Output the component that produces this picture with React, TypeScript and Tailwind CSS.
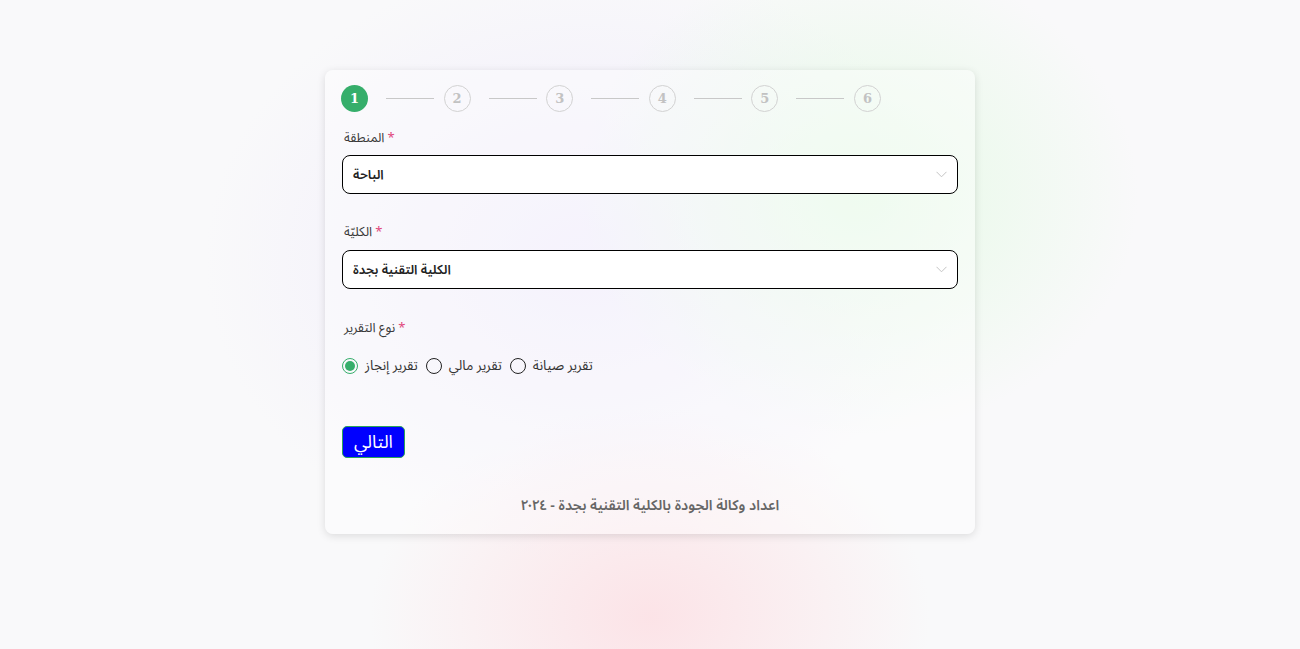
import React from "react";

function Chevron() {
  return (
    <svg width="11" height="7" viewBox="0 0 11 7" fill="none" className="shrink-0">
      <path d="M0.5 0.8L5.5 5.8L10.5 0.8" stroke="#c4c4c4" strokeWidth="1" />
    </svg>
  );
}

function Step({ n, active, last }: { n: number; active?: boolean; last?: boolean }) {
  return (
    <div className="flex items-center">
      <div
        className={
          active
            ? "w-[27px] h-[27px] rounded-full bg-[#36ae6b] text-white flex items-center justify-center text-[13px] font-bold font-['DejaVu_Serif',serif]"
            : "w-[27px] h-[27px] rounded-full border border-[#d2d2d2] text-[#c2c2c2] flex items-center justify-center text-[13px] font-bold font-['DejaVu_Serif',serif]"
        }
      >
        {n}
      </div>
      {!last && <div className="ml-[18px] mr-[9.6px] w-[48px] h-px bg-[#c8c8c8]" />}
    </div>
  );
}

function Label({ text }: { text: string }) {
  return (
    <div className="flex items-center gap-[3px] text-[13px] text-[#3a3a3a] px-[2px] h-[18px] font-['Noto_Sans_Arabic',sans-serif]">
      <span>{text}</span>
      <span className="text-[#e0457b]">*</span>
    </div>
  );
}

function Select({ value }: { value: string }) {
  return (
    <div className="h-[39px] w-full rounded-[8px] border border-black bg-white flex items-center justify-between pl-[10px] pr-[10px]">
      <span className="text-[13px] font-semibold text-[#222] font-['Noto_Sans_Arabic_UI',sans-serif]">{value}</span>
      <Chevron />
    </div>
  );
}

function Radio({ label, checked }: { label: string; checked?: boolean }) {
  return (
    <div className="flex items-center gap-[7px]">
      {checked ? (
        <div className="w-[16px] h-[16px] rounded-full border-[1.5px] border-[#36ae6b] flex items-center justify-center">
          <div className="w-[10px] h-[10px] rounded-full bg-[#36ae6b]" />
        </div>
      ) : (
        <div className="w-[16px] h-[16px] rounded-full border-[1.5px] border-[#222]" />
      )}
      <span className="text-[13.5px] text-[#333] font-['Noto_Sans_Arabic',sans-serif]">{label}</span>
    </div>
  );
}

export default function App() {
  return (
    <div className="min-h-screen w-full bg-[#f9f9fa] bg-[radial-gradient(ellipse_280px_240px_at_66%_30%,rgba(226,250,226,0.85),transparent),radial-gradient(ellipse_280px_210px_at_50%_95%,rgba(252,226,230,0.95),transparent),radial-gradient(ellipse_380px_300px_at_45%_40%,rgba(238,233,252,0.9),transparent)] pt-[70px] pb-[116px]">
      <div className="mx-auto w-[650px] rounded-[8px] bg-white/40 shadow-[0_2px_8px_rgba(0,0,0,0.12)] px-[17px] pt-[15px] pb-[18px]">
        <div className="flex items-center -ml-px">
          <Step n={1} active />
          <Step n={2} />
          <Step n={3} />
          <Step n={4} />
          <Step n={5} />
          <Step n={6} last />
        </div>

        <div className="mt-[18px]">
          <Label text="المنطقة" />
          <div className="mt-[7px]">
            <Select value="الباحة" />
          </div>
        </div>

        <div className="mt-[30px]">
          <Label text="الكليّة" />
          <div className="mt-[8px]">
            <Select value="الكلية التقنية بجدة" />
          </div>
        </div>

        <div className="mt-[31px]">
          <Label text="نوع التقرير" />
          <div className="mt-[18px] flex items-center gap-[8px]">
            <Radio label="تقرير إنجاز" checked />
            <Radio label="تقرير مالي" />
            <Radio label="تقرير صيانة" />
          </div>
        </div>

        <div className="mt-[50px]">
          <button className="w-[63px] h-[32px] rounded-[5px] border border-[#2aa35a] bg-[#0000ff] text-white text-[18px] flex items-center justify-center font-['Noto_Sans_Arabic',sans-serif]">
            التالي
          </button>
        </div>

        <div className="mt-[36px] text-center text-[14.3px] font-semibold text-[#666] font-['Noto_Sans_Arabic_UI',sans-serif]">
          اعداد وكالة الجودة بالكلية التقنية بجدة - ٢٠٢٤
        </div>
      </div>
    </div>
  );
}
